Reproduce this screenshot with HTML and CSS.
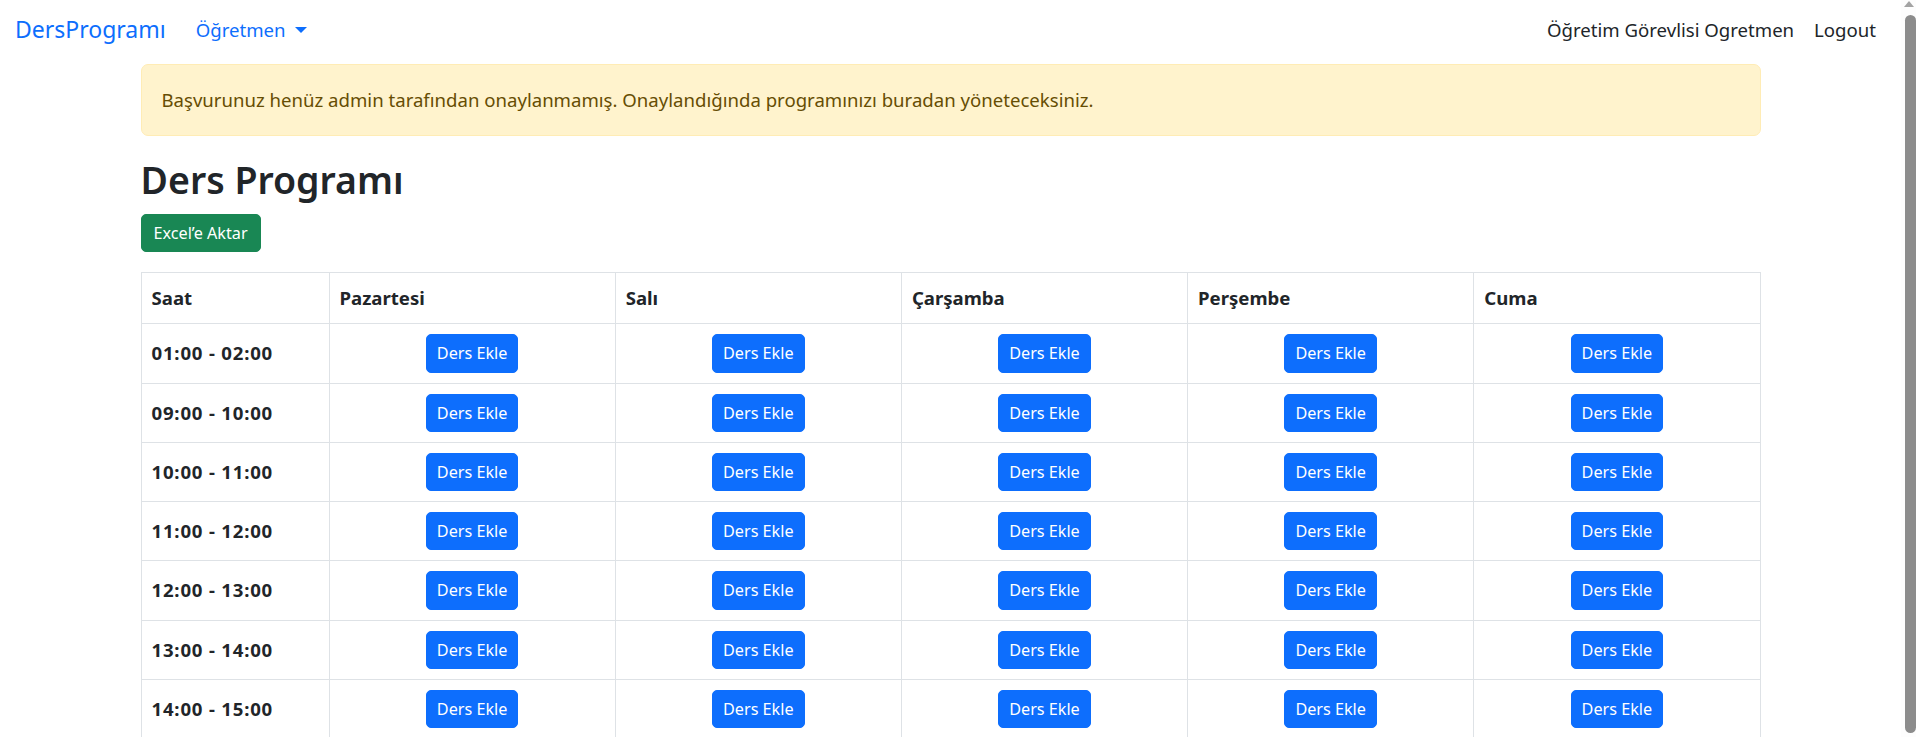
FILE: index.html
```html
<!DOCTYPE html>
<html lang="tr">
<head>
<meta charset="utf-8">
<title>DersProgramı</title>
<link rel="stylesheet" href="styles.css">
</head>
<body>
<div class="page">
  <nav class="navbar">
    <div class="nav-left">
      <a class="brand" href="#">DersProgramı</a>
      <a class="nav-link link-primary" href="#">Öğretmen<span class="caret"></span></a>
    </div>
    <div class="nav-right">
      <span class="nav-link">Öğretim Görevlisi Ogretmen</span>
      <a class="nav-link" href="#">Logout</a>
    </div>
  </nav>
  <main class="container">
    <div class="alert">Başvurunuz henüz admin tarafından onaylanmamış. Onaylandığında programınızı buradan yöneteceksiniz.</div>
    <h2 class="title">Ders Programı</h2>
    <button class="btn btn-success btn-excel">Excel’e Aktar</button>
    <table class="schedule">
      <colgroup><col class="col-time"><col><col><col><col><col></colgroup>
      <thead>
        <tr><th>Saat</th><th>Pazartesi</th><th>Salı</th><th>Çarşamba</th><th>Perşembe</th><th>Cuma</th></tr>
      </thead>
      <tbody>
        <tr><th class="time">01:00 - 02:00</th><td><button class="btn btn-primary">Ders Ekle</button></td><td><button class="btn btn-primary">Ders Ekle</button></td><td><button class="btn btn-primary">Ders Ekle</button></td><td><button class="btn btn-primary">Ders Ekle</button></td><td><button class="btn btn-primary">Ders Ekle</button></td></tr>
        <tr><th class="time">09:00 - 10:00</th><td><button class="btn btn-primary">Ders Ekle</button></td><td><button class="btn btn-primary">Ders Ekle</button></td><td><button class="btn btn-primary">Ders Ekle</button></td><td><button class="btn btn-primary">Ders Ekle</button></td><td><button class="btn btn-primary">Ders Ekle</button></td></tr>
        <tr><th class="time">10:00 - 11:00</th><td><button class="btn btn-primary">Ders Ekle</button></td><td><button class="btn btn-primary">Ders Ekle</button></td><td><button class="btn btn-primary">Ders Ekle</button></td><td><button class="btn btn-primary">Ders Ekle</button></td><td><button class="btn btn-primary">Ders Ekle</button></td></tr>
        <tr><th class="time">11:00 - 12:00</th><td><button class="btn btn-primary">Ders Ekle</button></td><td><button class="btn btn-primary">Ders Ekle</button></td><td><button class="btn btn-primary">Ders Ekle</button></td><td><button class="btn btn-primary">Ders Ekle</button></td><td><button class="btn btn-primary">Ders Ekle</button></td></tr>
        <tr><th class="time">12:00 - 13:00</th><td><button class="btn btn-primary">Ders Ekle</button></td><td><button class="btn btn-primary">Ders Ekle</button></td><td><button class="btn btn-primary">Ders Ekle</button></td><td><button class="btn btn-primary">Ders Ekle</button></td><td><button class="btn btn-primary">Ders Ekle</button></td></tr>
        <tr><th class="time">13:00 - 14:00</th><td><button class="btn btn-primary">Ders Ekle</button></td><td><button class="btn btn-primary">Ders Ekle</button></td><td><button class="btn btn-primary">Ders Ekle</button></td><td><button class="btn btn-primary">Ders Ekle</button></td><td><button class="btn btn-primary">Ders Ekle</button></td></tr>
        <tr><th class="time">14:00 - 15:00</th><td><button class="btn btn-primary">Ders Ekle</button></td><td><button class="btn btn-primary">Ders Ekle</button></td><td><button class="btn btn-primary">Ders Ekle</button></td><td><button class="btn btn-primary">Ders Ekle</button></td><td><button class="btn btn-primary">Ders Ekle</button></td></tr>
      </tbody>
    </table>
  </main>
</div>
<div class="scrollbar" aria-hidden="true"><span class="sb-arrow"></span><span class="sb-thumb"></span></div>
</body>
</html>
```
FILE: styles.css
```css
html, body {
  margin: 0;
  padding: 0;
  height: 100%;
  overflow: hidden;
  background: #fff;
}
body {
  font-family: "Noto Sans", "Open Sans", sans-serif;
  font-size: 18.6px;
  line-height: 30px;
  color: #212529;
}
.page {
  margin-right: 15px;
}
a { text-decoration: none; }

.navbar {
  height: 60px;
  display: flex;
  align-items: center;
  justify-content: space-between;
  padding: 0 15px;
}
.nav-left, .nav-right {
  display: flex;
  align-items: center;
}
.brand {
  font-size: 23px;
  line-height: 37.5px;
  padding: 6px 0;
  margin-right: 20px;
  color: #0d6efd;
}
.nav-link {
  padding: 10px;
  line-height: 30px;
  color: #212529;
}
.nav-link.link-primary { color: #0d6efd; }
.caret {
  display: inline-block;
  margin-left: 9px;
  vertical-align: 4px;
  border-top: 6px solid currentColor;
  border-left: 6px solid transparent;
  border-right: 6px solid transparent;
}

.container {
  width: 1620px;
  margin: 4px auto 0;
}
.alert {
  background: #fff3cd;
  border: 1px solid #ffecb5;
  color: #664d03;
  border-radius: 7px;
  padding: 20px;
  line-height: 30px;
  margin-bottom: 20px;
}
.title {
  font-size: 37.5px;
  font-weight: 600;
  line-height: 48px;
  margin: 0 0 10px;
}
.btn {
  display: inline-block;
  font-family: inherit;
  font-size: 16.2px;
  line-height: 26.25px;
  padding: 5px 10px;
  border: 1px solid transparent;
  border-radius: 5px;
  color: #fff;
  cursor: pointer;
}
.btn-excel { padding: 5px 12px; }
.btn-success { background: #198754; border-color: #198754; }
.btn-primary { background: #0d6efd; border-color: #0d6efd; }

.schedule {
  width: 100%;
  margin-top: 20px;
  border-collapse: collapse;
  table-layout: fixed;
}
.col-time { width: 188px; }
.schedule th, .schedule td {
  border: 1px solid #dee2e6;
  padding: 10px;
  line-height: 30px;
}
.schedule thead th {
  text-align: left;
  font-weight: 700;
  vertical-align: bottom;
}
.schedule tbody th.time {
  text-align: left;
  font-weight: 700;
  letter-spacing: 0.8px;
}
.schedule td {
  text-align: center;
  vertical-align: middle;
}
.schedule td .btn { vertical-align: middle; }

.scrollbar {
  position: fixed;
  top: 0;
  right: 0;
  bottom: 0;
  width: 15px;
  background: #fdfdfd;
}
.sb-arrow {
  position: absolute;
  top: 1px;
  left: 3px;
  border-bottom: 6px solid #a3a3a3;
  border-left: 5px solid transparent;
  border-right: 5px solid transparent;
}
.sb-thumb {
  position: absolute;
  top: 15px;
  bottom: 4px;
  left: 4px;
  width: 11px;
  border-radius: 6px;
  background: #8c8c8c;
}
```
